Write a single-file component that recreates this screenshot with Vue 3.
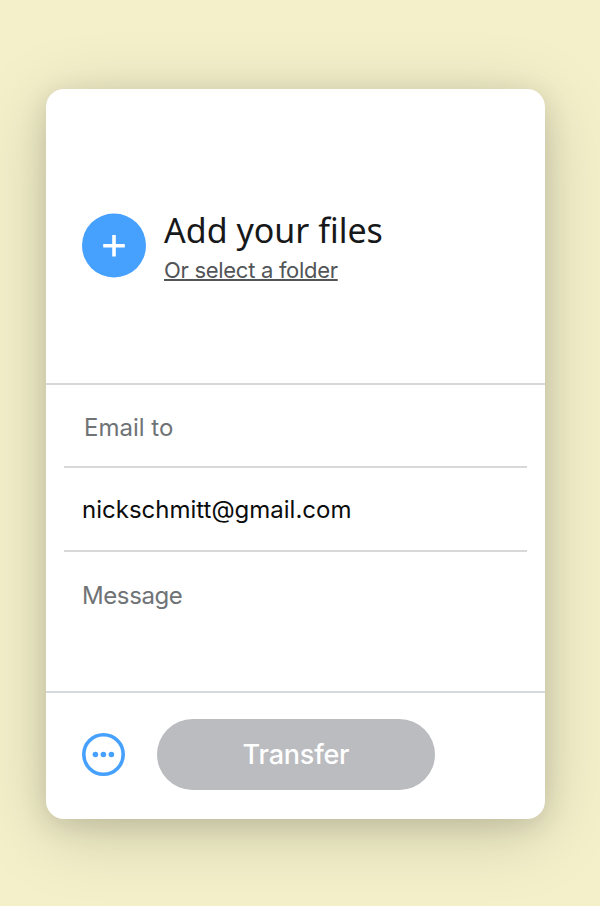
<script setup>
import { ref } from 'vue'

const sender = ref('nickschmitt@gmail.com')
</script>

<template>
  <main class="page">
    <section class="card">
      <div class="files">
        <svg class="add" viewBox="0 0 64 64" aria-hidden="true">
          <circle cx="32" cy="32" r="32" fill="#46a0fd" />
          <path d="M32 21.5v21.5M21.2 32.2h21.6" stroke="#fff" stroke-width="3.6" />
        </svg>
        <div class="copy">
          <h1>Add your files</h1>
          <a class="folder">Or select a folder</a>
        </div>
      </div>
      <div class="fields">
        <div class="field to">Email to</div>
        <div class="field from">{{ sender }}</div>
        <div class="field message">Message</div>
      </div>
      <footer class="actions">
        <svg class="more" viewBox="0 0 43 43" aria-hidden="true">
          <circle cx="21.5" cy="21.5" r="19.7" fill="none" stroke="#46a0fd" stroke-width="3.6" />
          <g fill="#46a0fd">
            <circle cx="13.4" cy="21.5" r="2.8" />
            <circle cx="21.4" cy="21.5" r="2.8" />
            <circle cx="29.4" cy="21.5" r="2.8" />
          </g>
        </svg>
        <button class="transfer">Transfer</button>
      </footer>
    </section>
  </main>
</template>

<style>
body {
  background: #f4f0ca;
}
</style>

<style scoped>
.page {
  box-sizing: border-box;
  height: 906px;
  padding: 89px 55px 87px 46px;
  overflow: hidden;
  background: #f4f0ca;
  font-family: Inter, "Liberation Sans", sans-serif;
}
.card {
  display: flex;
  flex-direction: column;
  height: 730px;
  border-radius: 18px;
  background: #fff;
  box-shadow: 0 14px 72px rgba(0, 0, 0, 0.17), 0 6px 28px rgba(0, 0, 0, 0.12);
}
.files {
  box-sizing: border-box;
  display: flex;
  height: 296px;
  padding: 124px 36px 0;
  gap: 18px;
  border-bottom: 2px solid #d6d9db;
}
.add {
  flex: none;
  width: 64px;
  height: 65px;
}
.copy {
  display: flex;
  flex-direction: column;
  align-items: flex-start;
}
h1 {
  margin: -4px 0 0;
  font: 400 34px/42px "Noto Sans", sans-serif;
  color: #17181a;
  white-space: nowrap;
}
.folder {
  margin-top: 5px;
  font-size: 22px;
  line-height: 28px;
  letter-spacing: -0.29px;
  color: #525558;
  white-space: nowrap;
  text-decoration: underline;
  text-decoration-thickness: 2px;
  text-underline-offset: 1px;
  text-decoration-skip-ink: none;
}
.fields {
  height: 306px;
  padding: 0 18px;
}
.field {
  box-sizing: border-box;
  height: 84px;
  padding: 0 18px;
  border-bottom: 2px solid #d6d8da;
  font-size: 24px;
  line-height: 87px;
  color: #6f7376;
  white-space: nowrap;
}
.to {
  height: 83px;
  padding-left: 20px;
  line-height: 85px;
}
.from {
  line-height: 84px;
  color: #0b0c0d;
}
.message {
  height: 138px;
  border: 0;
  letter-spacing: -0.4px;
}
.actions {
  flex: 1;
  display: flex;
  align-items: center;
  gap: 32px;
  padding: 0 36px 4px;
  border-top: 2px solid #d6d9db;
}
.more {
  flex: none;
  width: 43px;
  height: 43px;
}
.transfer {
  width: 278px;
  height: 71px;
  padding: 0;
  border: 0;
  border-radius: 36px;
  background: #bbbcc0;
  color: #fff;
  font: 500 27px/71px Inter, "Liberation Sans", sans-serif;
  letter-spacing: -0.2px;
}
</style>
